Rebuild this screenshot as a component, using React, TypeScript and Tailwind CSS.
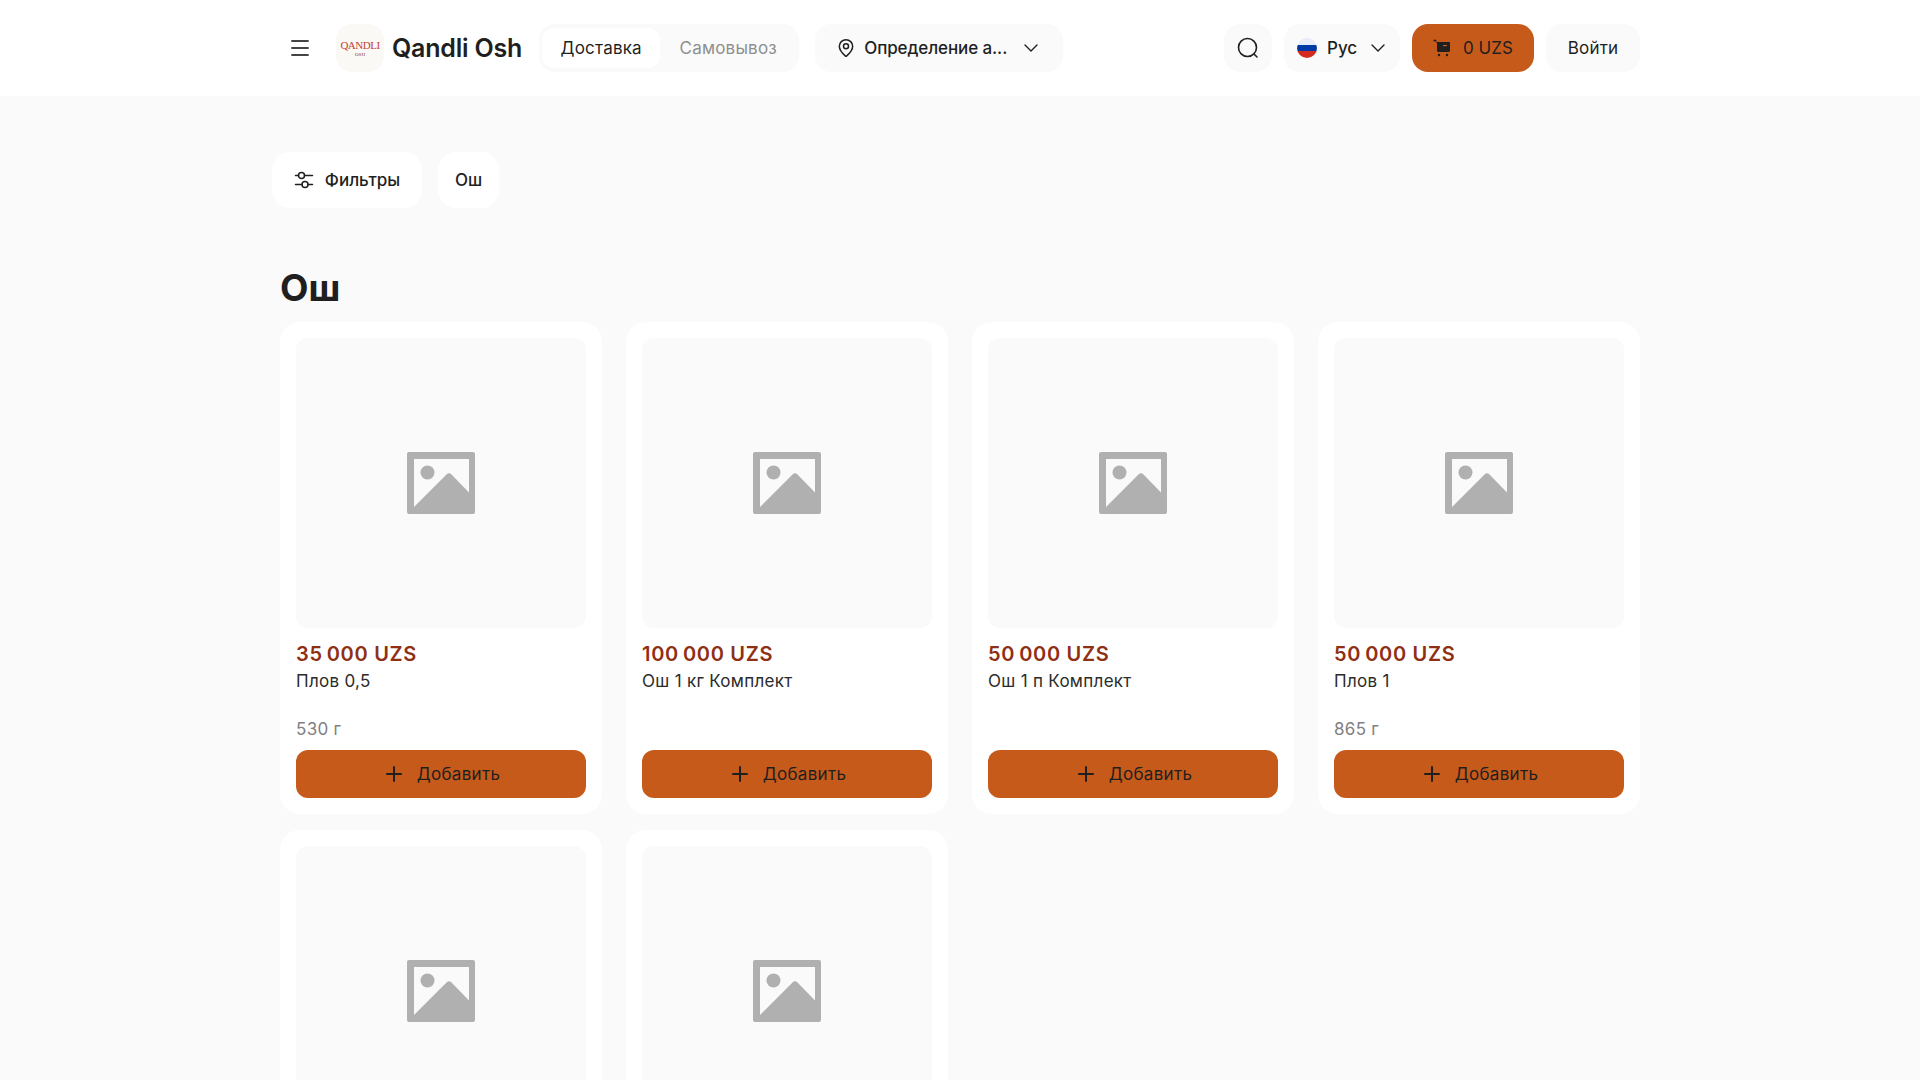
import React from 'react'
import { ChevronDown, Menu, MapPin, Plus } from 'lucide-react'

const products = [
  { price: '35\u2009000 UZS', name: 'Плов 0,5', weight: '530 г' },
  { price: '100\u2009000 UZS', name: 'Ош 1 кг Комплект', weight: '' },
  { price: '50\u2009000 UZS', name: 'Ош 1 п Комплект', weight: '' },
  { price: '50\u2009000 UZS', name: 'Плов 1', weight: '865 г' },
]

function PlaceholderIcon() {
  return (
    <svg width="68" height="62" viewBox="0 0 68 62">
      <rect width="68" height="62" rx="2" fill="#b0b0b0" />
      <rect x="7" y="7" width="55" height="48" fill="#fafafa" />
      <circle cx="20.5" cy="20.5" r="7" fill="#b0b0b0" />
      <path d="M7 55 L39.5 22.5 Q42 20 44.5 22.5 L62 40.5 V55 Z" fill="#b0b0b0" />
    </svg>
  )
}

function FilterIcon() {
  return (
    <svg width="20" height="20" viewBox="0 0 20 20" fill="none" stroke="#1f1f1f" strokeWidth="1.5" strokeLinecap="round">
      <path d="M1.5 5.5H4.5M10.5 5.5H18.5M1.5 14.5H8M14 14.5H18.5" />
      <circle cx="7.5" cy="5.5" r="3" />
      <circle cx="11" cy="14.5" r="3" />
    </svg>
  )
}

function SearchIcon() {
  return (
    <svg width="24" height="24" viewBox="0 0 24 24" fill="none" stroke="#1f1f1f" strokeWidth="1.6" strokeLinecap="round">
      <circle cx="11.5" cy="11.5" r="9" />
      <path d="M18.5 18.5L21 21" />
    </svg>
  )
}

function CartIcon() {
  return (
    <svg width="18" height="18" viewBox="0 0 18 18" fill="#1f1f1f">
      <path d="M0.5 0.8H3L3.8 3H17V11.5Q17 13 15.5 13H5.5Q4 13 4 11.5V4L2.4 2.2H0.5Z" />
      <rect x="10" y="6" width="4" height="1.2" fill="#c65a1b" />
      <circle cx="6" cy="16" r="1.2" />
      <circle cx="14" cy="16" r="1.2" />
    </svg>
  )
}

function FlagIcon() {
  return (
    <span className="flex h-5 w-5 flex-col overflow-hidden rounded-full">
      <span className="h-[7px] bg-[#e8ecf8]" />
      <span className="h-[6px] bg-[#0039a6]" />
      <span className="h-[7px] bg-[#d52b1e]" />
    </span>
  )
}

function Card({ price, name, weight }: { price?: string; name?: string; weight?: string }) {
  return (
    <div className="rounded-[20px] bg-white p-4">
      <div className="flex h-[290px] items-center justify-center rounded-xl bg-[#fafafa]">
        <PlaceholderIcon />
      </div>
      {price && (
        <>
          <div className="mt-[14px] text-[20px] font-semibold leading-6 tracking-[0.7px] text-[#8f2f14]">{price}</div>
          <div className="mt-[3px] h-12 text-[17px] leading-6 tracking-[0.3px] text-[#2b2b2b]">{name}</div>
          <div className="h-6 text-[17px] leading-6 tracking-[0.3px] text-[#808080]">{weight}</div>
          <button className="mt-[9px] flex h-12 w-full items-center justify-center gap-[11px] rounded-xl bg-[#c65a1b] text-[17px] leading-6 tracking-[0.3px] text-[#1f1f1f]">
            <Plus className="h-6 w-6" strokeWidth={2} />
            Добавить
          </button>
        </>
      )}
    </div>
  )
}

export default function App() {
  return (
    <div className="h-screen overflow-hidden bg-[#fafafa] font-['Inter',sans-serif] text-[#1f1f1f]">
      <header className="h-24 bg-white">
        <div className="mx-auto flex h-full w-[1376px] items-center px-2">
          <button className="flex h-10 w-10 items-center justify-center text-[#444]">
            <Menu className="h-6 w-6" strokeWidth={1.8} />
          </button>
          <div className="ml-4 flex h-12 w-12 flex-col items-center justify-center rounded-2xl bg-[#fbf9f6] font-['Liberation_Serif',serif] leading-none">
            <span className="text-[11px] tracking-[-0.5px] text-[#c4432f]">QANDLI</span>
            <span className="mt-[1px] text-[5px] text-[#8f2f14]">OSH</span>
          </div>
          <span className="ml-2 text-[25px] font-semibold leading-8 tracking-[-0.2px]">Qandli Osh</span>
          <div className="ml-[17px] flex h-12 w-[260px] items-center rounded-2xl bg-[#fafafa] px-[3px] text-[17px] leading-6 tracking-[0.2px]">
            <span className="flex h-10 w-[118px] items-center justify-center rounded-xl bg-white">Доставка</span>
            <span className="flex h-10 flex-1 items-center justify-center text-[#8f8f8f]">Самовывоз</span>
          </div>
          <button className="ml-4 flex h-12 w-[248px] items-center rounded-2xl bg-[#fafafa] pl-[21px] text-[17px] font-medium leading-6">
            <MapPin className="h-5 w-5" strokeWidth={1.8} />
            <span className="ml-2 tracking-[-0.1px]">Определение а...</span>
            <ChevronDown className="ml-auto mr-[20px] h-6 w-6" strokeWidth={1.4} />
          </button>
          <button className="ml-auto flex h-12 w-12 items-center justify-center rounded-2xl bg-[#fafafa]">
            <SearchIcon />
          </button>
          <button className="ml-3 flex h-12 w-[116px] items-center rounded-2xl bg-[#fafafa] pl-[13px] text-[17px] font-medium leading-6">
            <FlagIcon />
            <span className="ml-[10px]">Рус</span>
            <ChevronDown className="ml-auto mr-[10px] h-6 w-6" strokeWidth={1.4} />
          </button>
          <button className="ml-3 flex h-12 w-[122px] items-center justify-center gap-3 rounded-2xl bg-[#c65a1b] text-[17px] leading-6">
            <CartIcon />
            0 UZS
          </button>
          <button className="ml-3 flex h-12 w-[94px] items-center justify-center rounded-2xl bg-[#fafafa] text-[17px] leading-6 tracking-[0.2px]">
            Войти
          </button>
        </div>
      </header>

      <main className="mx-auto w-[1376px] pt-14">
        <div className="flex gap-4">
          <button className="flex h-14 w-[150px] items-center justify-center gap-[11px] rounded-[18px] bg-white text-[17px] font-medium leading-6">
            <FilterIcon />
            Фильтры
          </button>
          <button className="flex h-14 w-[61px] items-center justify-center rounded-[18px] bg-white text-[17px] font-medium leading-6">
            Ош
          </button>
        </div>
        <h1 className="ml-2 mt-[58px] text-[37px] font-bold leading-[44px]">Ош</h1>
        <div className="mt-3 grid grid-cols-4 gap-x-6 gap-y-4 px-2">
          {products.map((p) => (
            <Card key={p.name} {...p} />
          ))}
          <Card />
          <Card />
        </div>
      </main>
    </div>
  )
}
